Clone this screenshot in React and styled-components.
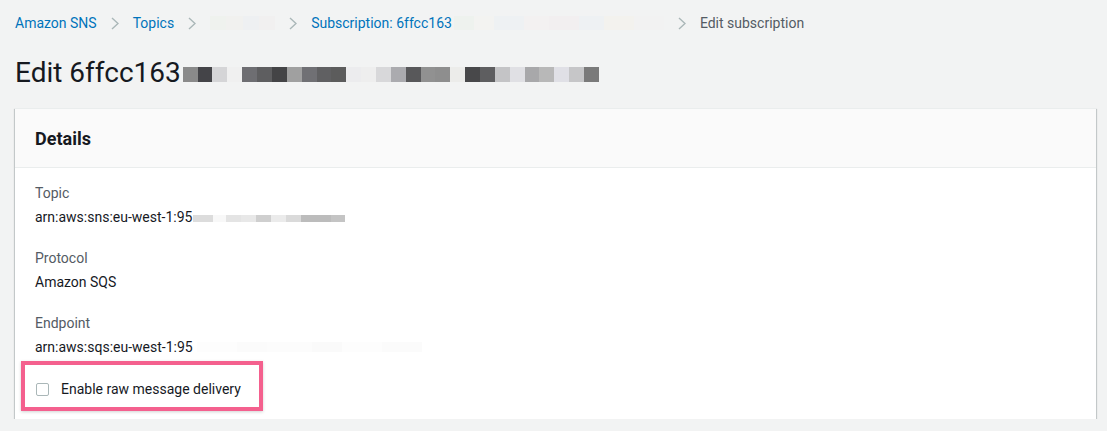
import React from "react";
import styled, { createGlobalStyle } from "styled-components";

// redacted bits in the screenshot, kept as flat colour blocks
const titleBlur = [
  "#8a8a8a", "#444448", "#d5d5d7", "#f0f0f0", "#6e6e72", "#5e5e60", "#444446",
  "#a0a0a0", "#707074", "#606062", "#5c5c5c", "#ececee", "#eeeeee", "#d8d8da",
  "#ababaf", "#58585a", "#919191", "#8e8e8e", "#ececea", "#48484a", "#5e5e60",
  "#c4c4c6", "#e0e0e4", "#a8a8aa", "#b8b8b8", "#e0e0e6", "#c6c6c8", "#7a7a7a",
];

const topicBlur = [
  [20, "#dcdcdc"], [13, "#f8f8f8"], [15, "#e4e4e4"], [15, "#e8e8e8"], [15, "#cfcfcf"],
  [15, "#ebebeb"], [15, "#dadada"], [30, "#bcbcbc"], [14, "#c4c4c4"],
];

const endpointBlur = [
  [40, "#fdfdfd"], [30, "#fbfbfb"], [45, "#fcfcfc"], [30, "#fafafa"], [40, "#fdfdfd"], [40, "#fbfbfb"],
];

const crumbBlurA = [[16, "#eff2ee"], [17, "#f1f1ef"], [16, "#eef0f2"], [16, "#f1f0f0"]];
const crumbBlurB = [
  [20, "#eef2ee"], [20, "#f3f3f1"], [30, "#eef1f3"], [25, "#f3f1f1"], [30, "#f2eff0"],
  [25, "#eef1f3"], [30, "#f3f2ee"], [30, "#f2f2f2"],
];

const GlobalStyle = createGlobalStyle`
  body {
    margin: 0;
    background: #f2f3f3;
    font-family: Roboto, "Liberation Sans", Arial, sans-serif;
    color: #16191f;
  }
`;

const Page = styled.div`
  padding: 13px 11px 0 15px;
`;

const Crumbs = styled.nav`
  display: flex;
  align-items: center;
  gap: 14px;
  font-size: 14px;
  line-height: 20px;
`;

const Crumb = styled.a`
  color: ${(p) => (p.$current ? "#545b64" : "#0073bb")};
  text-decoration: none;
  display: inline-flex;
  align-items: center;
  white-space: nowrap;
  &:hover {
    text-decoration: underline;
  }
`;

const Blur = styled.span`
  display: inline-flex;
  vertical-align: baseline;
  height: ${(p) => p.$h}px;
  margin-left: ${(p) => p.$ml || 0}px;
`;

const Cell = styled.span`
  display: block;
  height: 100%;
  width: ${(p) => (p.$w ? `${p.$w}px` : "auto")};
  flex: ${(p) => (p.$w ? "none" : 1)};
  background: ${(p) => p.$c};
`;

const TitleBlur = styled.span`
  display: inline-flex;
  vertical-align: baseline;
  width: 416px;
  height: 15px;
  margin-left: 2px;
`;

const Title = styled.h1`
  margin: 22px 0 17px;
  font-size: 28px;
  line-height: 36px;
  font-weight: 400;
  color: #16191f;
`;

const Card = styled.section`
  background: #fff;
  box-shadow: 0 1px 1px 0 rgba(0, 28, 36, 0.3), 1px 1px 1px 0 rgba(0, 28, 36, 0.15),
    -1px 1px 1px 0 rgba(0, 28, 36, 0.15);
  border-top: 1px solid #eaeded;
`;

const CardHeader = styled.header`
  height: 58px;
  display: flex;
  align-items: center;
  padding: 0 20px;
  background: #fafafa;
  border-bottom: 1px solid #eaeded;
`;

const CardTitle = styled.h2`
  margin: 0;
  font-size: 18px;
  font-weight: 700;
  color: #16191f;
`;

const CardBody = styled.div`
  padding: 14px 20px 8px;
`;

const Field = styled.div`
  margin-bottom: 19px;
`;

const Label = styled.div`
  font-size: 14px;
  line-height: 22px;
  color: #545b64;
`;

const Value = styled.div`
  margin-top: 2px;
  font-size: 14px;
  line-height: 22px;
  color: #16191f;
  white-space: nowrap;
`;

const Highlight = styled.label`
  display: inline-flex;
  align-items: center;
  gap: 12px;
  margin: -16px 0 0 -14px;
  padding: 13px 18px 7px 11px;
  border: 4px solid #f4608e;
  box-shadow: 0 1px 3px rgba(0, 0, 0, 0.18);
  font-size: 14px;
  line-height: 22px;
  color: #16191f;
  cursor: pointer;
`;

const Box = styled.span`
  width: 13px;
  height: 13px;
  box-sizing: border-box;
  border: 1px solid #aab7b8;
  border-radius: 2px;
  background: #fff;
  flex: none;
`;

function Chevron() {
  return (
    <svg width="8" height="13" viewBox="0 0 8 13" fill="none">
      <path d="M1 1l6 5.5L1 12" stroke="#aab7b8" strokeWidth="1.4" />
    </svg>
  );
}

function Redacted({ cells, h, ml }) {
  return (
    <Blur $h={h} $ml={ml}>
      {cells.map(([w, c], i) => (
        <Cell key={i} $w={w} $c={c} />
      ))}
    </Blur>
  );
}

export default function App() {
  return (
    <Page>
      <GlobalStyle />
      <Crumbs>
        <Crumb href="#">Amazon SNS</Crumb>
        <Chevron />
        <Crumb href="#">Topics</Crumb>
        <Chevron />
        <Redacted cells={crumbBlurA} h={14} />
        <Chevron />
        <Crumb href="#">
          Subscription: 6ffcc163
          <Redacted cells={crumbBlurB} h={14} ml={2} />
        </Crumb>
        <Chevron />
        <Crumb $current>Edit subscription</Crumb>
      </Crumbs>

      <Title>
        Edit 6ffcc163
        <TitleBlur>
          {titleBlur.map((c, i) => (
            <Cell key={i} $c={c} />
          ))}
        </TitleBlur>
      </Title>

      <Card>
        <CardHeader>
          <CardTitle>Details</CardTitle>
        </CardHeader>
        <CardBody>
          <Field>
            <Label>Topic</Label>
            <Value>
              arn:aws:sns:eu-west-1:95
              <Redacted cells={topicBlur} h={7} ml={1} />
            </Value>
          </Field>
          <Field>
            <Label>Protocol</Label>
            <Value>Amazon SQS</Value>
          </Field>
          <Field>
            <Label>Endpoint</Label>
            <Value>
              arn:aws:sqs:eu-west-1:95
              <Redacted cells={endpointBlur} h={10} ml={4} />
            </Value>
          </Field>
          <Highlight>
            <Box />
            Enable raw message delivery
          </Highlight>
        </CardBody>
      </Card>
    </Page>
  );
}
